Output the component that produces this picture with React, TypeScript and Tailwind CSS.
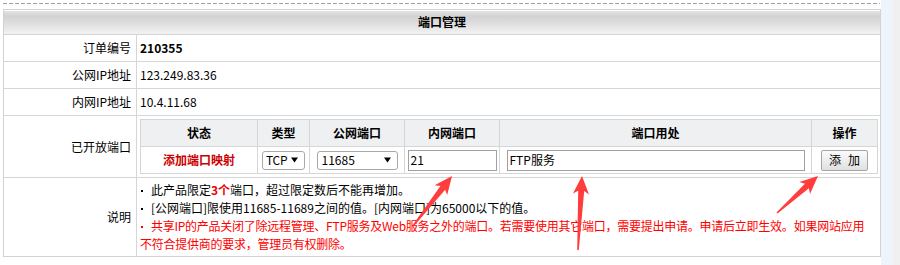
import * as React from "react"

const arrows = [
  { x1: 413, y1: 226, x2: 452, y2: 176 },
  { x1: 578, y1: 250, x2: 582, y2: 176 },
  { x1: 777, y1: 213, x2: 818, y2: 176 },
]

function arrowPoints(x1: number, y1: number, x2: number, y2: number) {
  const dx = x2 - x1
  const dy = y2 - y1
  const len = Math.hypot(dx, dy)
  const ux = dx / len
  const uy = dy / len
  const nx = -uy
  const ny = ux
  const head = 18
  const hw = 8
  const sw = 3
  const tw = 0.8
  const bx = x2 - ux * head
  const by = y2 - uy * head
  const nb = 3
  const pts = [
    [x1 + nx * tw, y1 + ny * tw],
    [bx + ux * nb + nx * sw, by + uy * nb + ny * sw],
    [bx + nx * hw, by + ny * hw],
    [x2, y2],
    [bx - nx * hw, by - ny * hw],
    [bx + ux * nb - nx * sw, by + uy * nb - ny * sw],
    [x1 - nx * tw, y1 - ny * tw],
  ]
  return pts.map((p) => p.map((v) => v.toFixed(1)).join(",")).join(" ")
}

function Caret() {
  return (
    <svg width="7" height="6" viewBox="0 0 7 6" className="shrink-0">
      <path d="M0 0.5 H7 L3.5 5.5 Z" fill="#000" />
    </svg>
  )
}

function InfoRow({ label, children }: { label: string; children: React.ReactNode }) {
  return (
    <div className="flex h-[27px] border-b border-[#d6d6d6]">
      <div className="w-[133px] border-r border-[#d6d6d6] flex items-center justify-end pr-[5px]">{label}</div>
      <div className="flex-1 flex items-center pl-[3px]">{children}</div>
    </div>
  )
}

function Bullet() {
  return <span className="inline-block w-[2px] h-[2px] bg-current align-middle mr-[8px] ml-[1px] relative -top-[1px]" />
}

export default function App() {
  const headCell = "border-r border-[#d6d6d6] flex items-center justify-center font-bold"
  const dataCell = "border-r border-[#d6d6d6] flex items-center justify-center"

  return (
    <div className="relative flex w-[900px] h-[265px] bg-white overflow-hidden font-['Noto_Sans_CJK_SC',sans-serif] text-[12px] leading-[14px] text-black">
      <div className="w-[881px] pt-[3px]">
        <div className="ml-[3px] mr-[1px] h-px bg-[repeating-linear-gradient(90deg,#a0a0a0_0,#a0a0a0_4px,transparent_4px,transparent_6px)]" />

        <div className="mt-[5px] ml-[3px] w-[878px] border border-[#d2d2d2]">
          <div className="h-[25px] border-b border-[#d4d4d4] bg-[linear-gradient(#fff_0,#fff_1px,#e2e2e2_1px,#d3d3d3_6px,#d8d8d8_10px,#f2f2f2_100%)] flex items-center justify-center font-bold">
            端口管理
          </div>

          <InfoRow label="订单编号">
            <span className="font-bold">210355</span>
          </InfoRow>
          <InfoRow label="公网IP地址">123.249.83.36</InfoRow>
          <InfoRow label="内网IP地址">10.4.11.68</InfoRow>

          <div className="flex h-[62px] border-b border-[#d6d6d6]">
            <div className="w-[133px] border-r border-[#d6d6d6] flex items-center justify-end pr-[5px]">已开放端口</div>
            <div className="flex-1 pl-[3px] pt-[3px]">
              <div className="w-[738px] border-l border-t border-[#d6d6d6]">
                <div className="grid grid-cols-[117px_52px_95px_95px_312px_66px] h-[27px] border-b border-[#d6d6d6] bg-[#eff0f2]">
                  <div className={headCell}>状态</div>
                  <div className={headCell}>类型</div>
                  <div className={headCell}>公网端口</div>
                  <div className={headCell}>内网端口</div>
                  <div className={headCell}>端口用处</div>
                  <div className={headCell}>操作</div>
                </div>
                <div className="grid grid-cols-[117px_52px_95px_95px_312px_66px] h-[27px] border-b border-[#d6d6d6]">
                  <div className={dataCell + " font-bold text-[#cc0000]"}>添加端口映射</div>
                  <div className={dataCell}>
                    <div className="w-[43px] h-[19px] border border-[#a8a8a8] rounded-[3px] bg-white flex items-center justify-between pl-[3px] pr-[6px]">
                      <span className="tracking-[-0.3px]">TCP</span>
                      <Caret />
                    </div>
                  </div>
                  <div className={dataCell}>
                    <div className="w-[81px] h-[19px] border border-[#a8a8a8] rounded-[3px] bg-white flex items-center justify-between pl-[4px] pr-[6px]">
                      <span>11685</span>
                      <Caret />
                    </div>
                  </div>
                  <div className={dataCell}>
                    <div className="w-[89px] h-[21px] border border-[#a0a0a0] bg-white flex items-center pl-[2px]">21</div>
                  </div>
                  <div className={dataCell}>
                    <div className="w-[298px] h-[21px] border border-[#a0a0a0] bg-white flex items-center pl-[2px]">FTP服务</div>
                  </div>
                  <div className={dataCell}>
                    <div className="w-[47px] h-[21px] border border-[#a5a5a5] rounded-[2px] bg-[linear-gradient(#fbfbfb,#e0e0e0)] flex items-center justify-center gap-[7px]">
                      <span>添</span>
                      <span>加</span>
                    </div>
                  </div>
                </div>
              </div>
            </div>
          </div>

          <div className="flex h-[78px]">
            <div className="w-[133px] border-r border-[#d6d6d6] flex items-center justify-end pr-[5px]">说明</div>
            <div className="flex-1 pl-[3px] pt-[3px] leading-[18px] whitespace-nowrap">
              <div>
                <Bullet />
                此产品限定<span className="font-bold text-[#ee0000]">3个</span>端口，超过限定数后不能再增加。
              </div>
              <div>
                <Bullet />
                [公网端口]限使用11685-11689之间的值。[内网端口]为65000以下的值。
              </div>
              <div className="text-[#ff0000] tracking-[-0.25px]">
                <Bullet />
                共享IP的产品关闭了除远程管理、FTP服务及Web服务之外的端口。若需要使用其它端口，需要提出申请。申请后立即生效。如果网站应用
                <br />
                不符合提供商的要求，管理员有权删除。
              </div>
            </div>
          </div>
        </div>
      </div>

      <div className="w-[12px] h-full bg-[#edf4fc]" />
      <div className="flex-1 h-full bg-[#f0f0f0]" />

      <svg className="absolute left-0 top-0 pointer-events-none" width="900" height="265">
        {arrows.map((a, i) => (
          <polygon key={i} points={arrowPoints(a.x1, a.y1, a.x2, a.y2)} fill="#ff3d3d" />
        ))}
      </svg>
    </div>
  )
}
